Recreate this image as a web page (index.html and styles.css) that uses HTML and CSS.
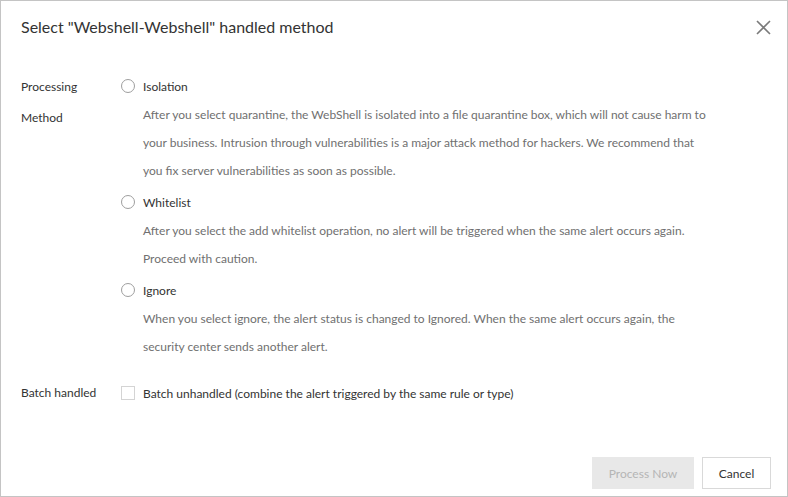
FILE: index.html
```html
<!DOCTYPE html>
<html lang="en">
<head>
<meta charset="utf-8">
<title>Handled method</title>
<link rel="stylesheet" href="styles.css">
</head>
<body>
<div class="dialog">
  <div class="header">
    <div class="title">Select "Webshell-Webshell" handled method</div>
    <button class="close" aria-label="Close">
      <svg width="15" height="15" viewBox="0 0 15 15"><path d="M1 1L14 14M14 1L1 14" stroke="#7a7a7a" stroke-width="1.6" fill="none"/></svg>
    </button>
  </div>
  <div class="body">
    <div class="form-item">
      <div class="label label-two">Processing<br>Method</div>
      <div class="control">
        <div class="option">
          <label class="radio-row"><span class="radio"></span><span class="radio-text">Isolation</span></label>
          <p class="desc">After you select quarantine, the WebShell is isolated into a file quarantine box, which will not cause harm to<br>your business. Intrusion through vulnerabilities is a major attack method for hackers. We recommend that<br>you fix server vulnerabilities as soon as possible.</p>
        </div>
        <div class="option">
          <label class="radio-row"><span class="radio"></span><span class="radio-text">Whitelist</span></label>
          <p class="desc">After you select the add whitelist operation, no alert will be triggered when the same alert occurs again.<br>Proceed with caution.</p>
        </div>
        <div class="option">
          <label class="radio-row"><span class="radio"></span><span class="radio-text">Ignore</span></label>
          <p class="desc">When you select ignore, the alert status is changed to Ignored. When the same alert occurs again, the<br>security center sends another alert.</p>
        </div>
      </div>
    </div>
    <div class="form-item batch">
      <div class="label">Batch handled</div>
      <div class="control">
        <label class="radio-row"><span class="checkbox"></span><span class="radio-text">Batch unhandled (combine the alert triggered by the same rule or type)</span></label>
      </div>
    </div>
  </div>
  <div class="footer">
    <button class="btn btn-disabled" disabled>Process Now</button>
    <button class="btn btn-default">Cancel</button>
  </div>
</div>
</body>
</html>
```
FILE: styles.css
```css
* { box-sizing: border-box; }
html, body { margin: 0; padding: 0; background: #fff; }
body { font-family: "Lato", "Open Sans", sans-serif; color: #333; }

.dialog {
  width: 788px;
  height: 497px;
  border: 1px solid #c4c4c4;
  display: flex;
  flex-direction: column;
  background: #fff;
}

.header {
  height: 50px;
  padding: 0 16px 0 20px;
  display: flex;
  align-items: center;
  justify-content: space-between;
}
.title {
  font-size: 16px;
  color: #333;
}
.close {
  border: 0;
  background: none;
  padding: 0;
  width: 15px;
  height: 15px;
  margin-top: 2px;
  cursor: pointer;
  display: flex;
}

.body {
  padding: 20px 20px 0 20px;
}

.form-item {
  display: flex;
  font-size: 12px;
}
.label {
  width: 100px;
  flex: none;
  color: #333;
  line-height: 30px;
}
.label-two { line-height: 31px; }

.control { flex: 1; }

.radio-row {
  display: flex;
  align-items: center;
  height: 30px;
  color: #333;
}
.radio {
  width: 14px;
  height: 14px;
  border: 1px solid #9e9e9e;
  border-radius: 50%;
  margin-right: 8px;
  flex: none;
}
.checkbox {
  width: 14px;
  height: 14px;
  border: 1px solid #d4d4d4;
  margin-right: 8px;
  flex: none;
}
.desc {
  margin: 0;
  padding: 0 0 2px 22px;
  line-height: 28px;
  color: #707070;
  white-space: nowrap;
}

.batch { margin-top: 15px; }

.footer {
  margin-top: auto;
  padding: 0 16px 7px 0;
  display: flex;
  justify-content: flex-end;
  gap: 8px;
}
.btn {
  height: 32px;
  font-family: inherit;
  font-size: 12px;
  padding: 0;
  border-radius: 0;
}
.btn-disabled {
  width: 102px;
  background: #e8e8e8;
  border: 1px solid #e8e8e8;
  color: #b5b5b5;
}
.btn-default {
  width: 69px;
  background: #fff;
  border: 1px solid #d9d9d9;
  color: #333;
}
```
